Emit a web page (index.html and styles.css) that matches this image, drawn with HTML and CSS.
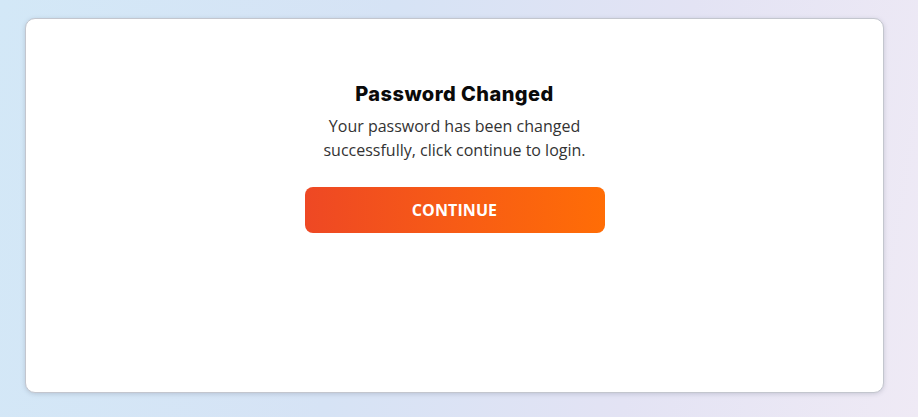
FILE: index.html
```html
<!DOCTYPE html>
<html lang="en">
<head>
<meta charset="utf-8">
<title>Password Changed</title>
<link rel="stylesheet" href="styles.css">
</head>
<body>
<main class="card">
  <section class="content">
    <h1 class="title">Password Changed</h1>
    <p class="message">Your password has been changed successfully, click continue to login.</p>
    <button class="btn" type="button">CONTINUE</button>
  </section>
</main>
</body>
</html>
```
FILE: styles.css
```css
html, body {
  margin: 0;
  padding: 0;
}
body {
  width: 918px;
  height: 417px;
  box-sizing: border-box;
  padding: 18px 34px 24px 25px;
  background: linear-gradient(100deg, #d3e8f7 0%, #d6e3f5 40%, #e3e3f4 70%, #efeaf5 100%);
  font-family: "Open Sans", "Liberation Sans", sans-serif;
  overflow: hidden;
}
.card {
  box-sizing: border-box;
  height: 375px;
  background: #ffffff;
  border: 1px solid #c3c6ce;
  border-radius: 10px;
  box-shadow: 0 1px 4px rgba(90, 100, 120, 0.25);
  display: flex;
  justify-content: center;
}
.content {
  width: 300px;
  padding-top: 63px;
  display: flex;
  flex-direction: column;
  align-items: center;
  text-align: center;
}
.title {
  margin: 0;
  font-family: Inter, "Liberation Sans", sans-serif;
  font-weight: 800;
  font-size: 20px;
  line-height: 24px;
  color: #0a0a0a;
  letter-spacing: 0.45px;
}
.message {
  margin: 8px 0 0;
  width: 300px;
  font-size: 16px;
  line-height: 24px;
  color: #333333;
}
.btn {
  margin-top: 25px;
  width: 300px;
  height: 46px;
  border: 0;
  border-radius: 8px;
  background: linear-gradient(90deg, #ee4824 0%, #f85d14 55%, #ff6d06 100%);
  color: #ffffff;
  font-family: "Open Sans", "Liberation Sans", sans-serif;
  font-weight: 700;
  font-size: 16px;
  letter-spacing: 0.1px;
  cursor: pointer;
}
```
